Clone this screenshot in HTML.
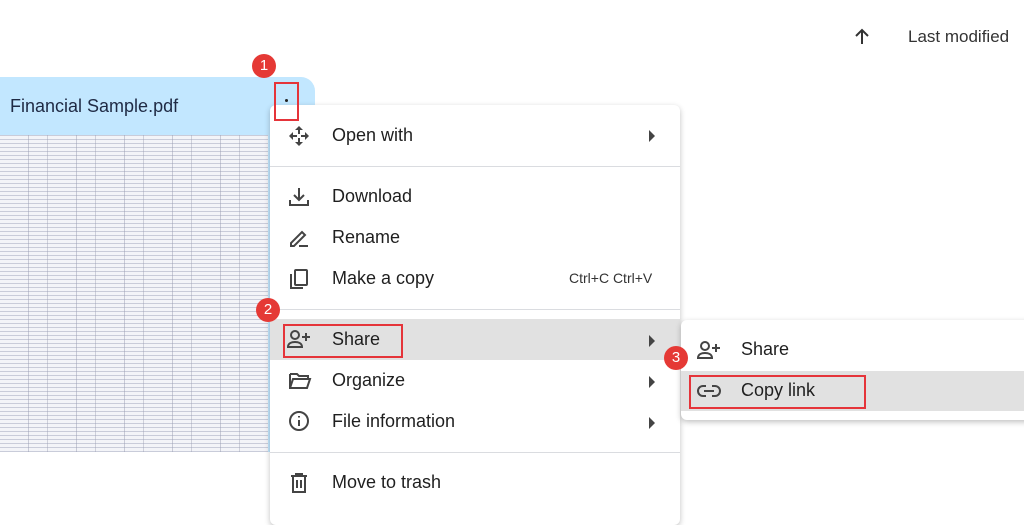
<!DOCTYPE html><html><head><style>
body{margin:0;width:1024px;height:512px;background:#fff;font-family:"Liberation Sans",sans-serif;position:relative;overflow:hidden;color:#1f1f1f}
.a{position:absolute}
.card{left:0;top:77px;width:315px;height:375px;background:#c2e7ff;border-radius:0 14px 14px 0}
.thumb{left:0;top:135px;width:268px;height:317px;background:
repeating-linear-gradient(0deg,rgba(150,155,180,.45) 0 1px,transparent 1px 4px),
repeating-linear-gradient(90deg,transparent 0 28px,rgba(120,125,150,.35) 28px 29px,transparent 29px 47px,rgba(120,125,150,.3) 47px 48px),#f3f4f8}
.menu{left:270px;top:105px;width:410px;height:420px;background:#fff;border-radius:6px;box-shadow:0 2px 6px rgba(0,0,0,.25)}
.sub{left:681px;top:320px;width:360px;height:100px;background:#fff;border-radius:6px;box-shadow:0 2px 6px rgba(0,0,0,.25)}
.t{font-size:18px;color:#1f1f1f}
.sep{height:1px;background:#dadce0;left:270px;width:410px}
.hl{background:#e1e1e1}
.arr{width:0;height:0;border-left:6px solid #444;border-top:6px solid transparent;border-bottom:6px solid transparent}
.box{border:2px solid #e5343a;box-sizing:border-box}
.badge{width:24px;height:24px;border-radius:50%;background:#e53935;color:#fff;font-size:15px;text-align:center;line-height:24px}
svg{position:absolute}
</style></head><body>
<svg style="left:852px;top:27px" width="20" height="20" viewBox="0 0 20 20"><path d="M10 17V3M4 9l6-6 6 6" stroke="#333" stroke-width="2" fill="none"/></svg>
<div class="a t" style="left:908px;top:27px;font-size:17px;color:#333">Last modified</div>
<div class="a card"></div>
<div class="a thumb"></div>
<div class="a" style="left:10px;top:96px;font-size:18px;color:#1f2a44">Financial Sample.pdf</div>
<div class="a" style="left:285px;top:99px;width:3px;height:3px;background:#222;border-radius:50%"></div>
<div class="a menu"></div>
<div class="a hl" style="left:270px;top:319px;width:410px;height:41px"></div>
<div class="a sep" style="top:166px"></div>
<div class="a sep" style="top:309px"></div>
<div class="a sep" style="top:452px"></div>
<div class="a sub"></div>
<div class="a hl" style="left:681px;top:371px;width:343px;height:40px"></div>
<svg style="left:288px;top:125px" width="22" height="22" viewBox="0 0 22 22" fill="#444"><path d="M11 1l4 4h-3v4h-2V5H7zM11 21l-4-4h3v-4h2v4h3zM1 11l4-4v3h4v2H5v3zM21 11l-4 4v-3h-4v-2h4V7z"/></svg>
<svg style="left:288px;top:186px" width="22" height="22" viewBox="0 0 22 22" fill="none" stroke="#444" stroke-width="2"><path d="M11 2v11M6 9l5 5 5-5M2 14v5h18v-5"/></svg>
<svg style="left:288px;top:227px" width="22" height="22" viewBox="0 0 22 22" fill="none" stroke="#444" stroke-width="2"><path d="M3 19v-3L14 5l3 3L6 19zM11 19h9"/></svg>
<svg style="left:288px;top:268px" width="22" height="22" viewBox="0 0 22 22" fill="none" stroke="#444" stroke-width="2"><rect x="7" y="2" width="12" height="15" rx="1"/><path d="M3 6v14h12"/></svg>
<svg style="left:286px;top:328px" width="26" height="22" viewBox="0 0 26 22" fill="none" stroke="#444" stroke-width="2"><circle cx="9" cy="7" r="4"/><path d="M2 19c0-4 4-5 7-5s7 1 7 5zM20 5v8M16 9h8"/></svg>
<svg style="left:288px;top:370px" width="24" height="22" viewBox="0 0 24 22" fill="none" stroke="#444" stroke-width="2"><path d="M2 4h7l2 2h9v3M2 4v14h17l3-9H5L2 18"/></svg>
<svg style="left:288px;top:410px" width="22" height="22" viewBox="0 0 22 22" fill="none" stroke="#444" stroke-width="2"><circle cx="11" cy="11" r="9"/><path d="M11 10v6M11 6v1.5"/></svg>
<svg style="left:288px;top:472px" width="22" height="22" viewBox="0 0 22 22" fill="none" stroke="#444" stroke-width="2"><path d="M3 4h16M8 4V2h6v2M5 4v16h12V4M9 8v8M13 8v8"/></svg>
<svg style="left:696px;top:339px" width="26" height="22" viewBox="0 0 26 22" fill="none" stroke="#444" stroke-width="2"><circle cx="9" cy="7" r="4"/><path d="M2 19c0-4 4-5 7-5s7 1 7 5zM20 5v8M16 9h8"/></svg>
<svg style="left:696px;top:380px" width="26" height="22" viewBox="0 0 26 22" fill="none" stroke="#444" stroke-width="2"><path d="M10 6H7a5 5 0 000 10h3M16 6h3a5 5 0 010 10h-3M8 11h10"/></svg>
<div class="a t" style="left:332px;top:125px">Open with</div>
<div class="a t" style="left:332px;top:186px">Download</div>
<div class="a t" style="left:332px;top:227px">Rename</div>
<div class="a t" style="left:332px;top:268px">Make a copy</div>
<div class="a" style="left:569px;top:270px;font-size:14px;color:#333">Ctrl+C Ctrl+V</div>
<div class="a t" style="left:332px;top:329px">Share</div>
<div class="a t" style="left:332px;top:370px">Organize</div>
<div class="a t" style="left:332px;top:411px">File information</div>
<div class="a t" style="left:332px;top:472px">Move to trash</div>
<div class="a t" style="left:741px;top:339px">Share</div>
<div class="a t" style="left:741px;top:380px">Copy link</div>
<div class="a arr" style="left:649px;top:130px"></div>
<div class="a arr" style="left:649px;top:335px"></div>
<div class="a arr" style="left:649px;top:376px"></div>
<div class="a arr" style="left:649px;top:417px"></div>
<div class="a box" style="left:274px;top:82px;width:25px;height:39px"></div>
<div class="a box" style="left:283px;top:324px;width:120px;height:34px"></div>
<div class="a box" style="left:689px;top:375px;width:177px;height:34px"></div>
<div class="a badge" style="left:252px;top:54px">1</div>
<div class="a badge" style="left:256px;top:298px">2</div>
<div class="a badge" style="left:664px;top:346px">3</div>
</body></html>
